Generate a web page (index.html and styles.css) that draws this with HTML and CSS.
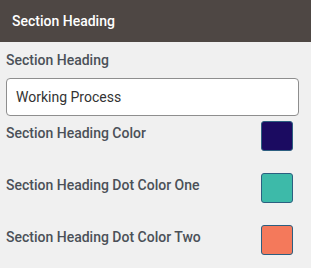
FILE: index.html
```html
<!DOCTYPE html>
<html lang="en">
<head>
    <meta charset="UTF-8">
    <meta name="viewport" content="width=device-width, initial-scale=1.0">
    <title>Section Heading</title>
    <link rel="stylesheet" href="styles.css">
</head>
<body>
    <div class="panel-header">Section Heading</div>

    <div class="panel-body">
        <label class="field-label" for="headingText">Section Heading</label>
        <input type="text" id="headingText" class="text-input" value="Working Process">

        <!-- Color pickers -->
        <div class="color-row">
            <span class="field-label">Section Heading Color</span>
            <span class="swatch swatch-navy"></span>
        </div>
        <div class="color-row">
            <span class="field-label">Section Heading Dot Color One</span>
            <span class="swatch swatch-teal"></span>
        </div>
        <div class="color-row">
            <span class="field-label">Section Heading Dot Color Two</span>
            <span class="swatch swatch-salmon"></span>
        </div>
    </div>
</body>
</html>
```

FILE: styles.css
```css
body {
    margin: 0;
    font-family: Roboto, 'Liberation Sans', sans-serif;
    background: #f0f0f0;
}
.panel-header {
    height: 42px;
    display: flex;
    align-items: center;
    padding-left: 12px;
    background: #4e4744;
    color: white;
    font-size: 14px;
    font-weight: 500;
}
.panel-body {
    padding: 6px 12px 0 6px;
}
.field-label {
    display: block;
    line-height: 24px;
    font-size: 14px;
    font-weight: 500;
    color: #4b5058;
}
.text-input {
    box-sizing: border-box;
    display: block;
    width: 100%;
    height: 38px;
    margin-top: 6px;
    padding: 0 9px;
    border: 1px solid #8e8e8e;
    border-radius: 4px;
    background: white;
    font-family: inherit;
    font-size: 14px;
    color: #333;
}
.color-row {
    display: flex;
    justify-content: space-between;
    align-items: flex-start;
    padding-right: 6px;
    margin-top: 5px;
    margin-bottom: 21px;
}
.color-row + .color-row {
    margin-top: 22px;
}
.swatch {
    box-sizing: border-box;
    width: 32px;
    height: 30px;
    border: 1px solid #2c5f80;
    border-radius: 3px;
}
.swatch-navy {
    background: #1b0b61;
}
.swatch-teal {
    background: #3dbaa9;
}
.swatch-salmon {
    background: #f4795b;
}
```
